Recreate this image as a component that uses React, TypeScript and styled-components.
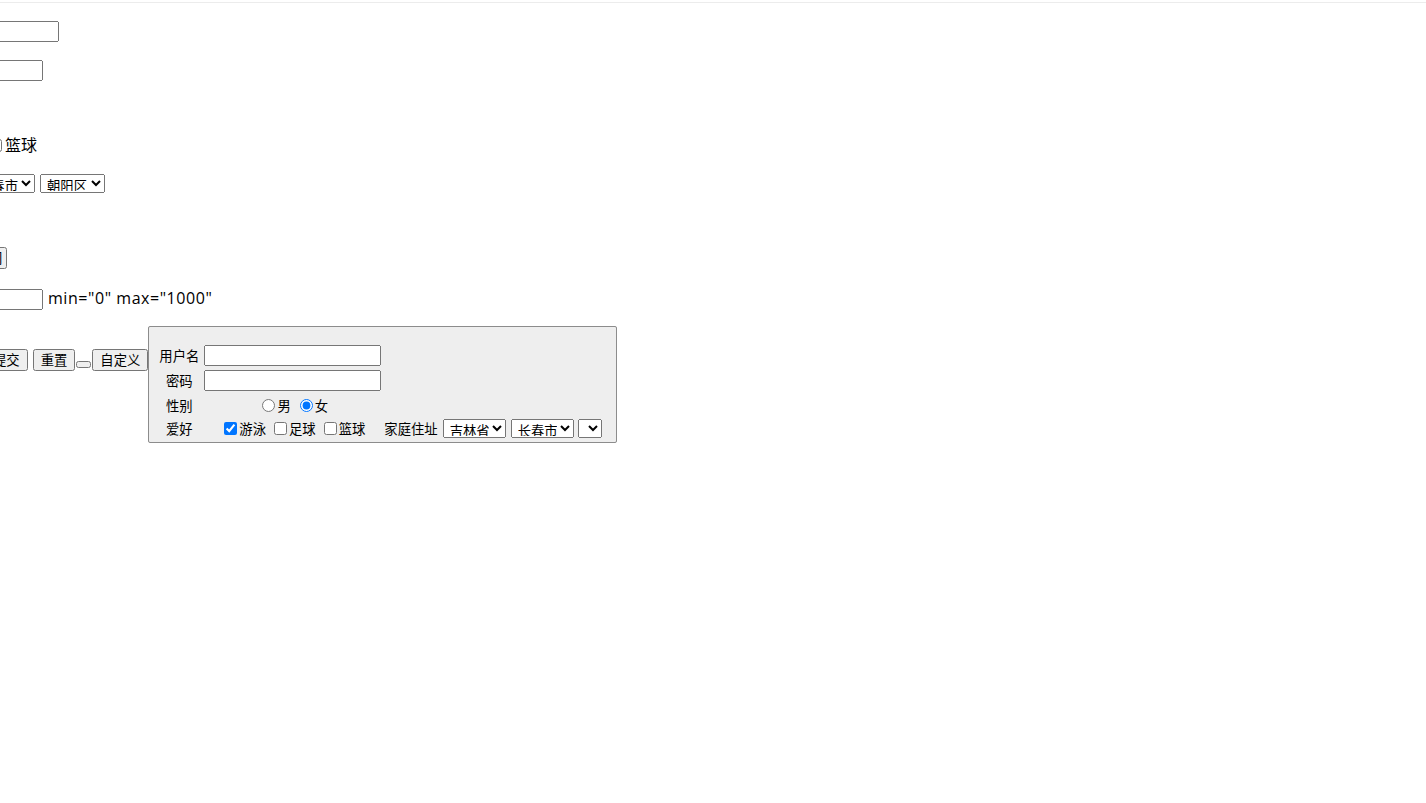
import React from "react";
import styled, { createGlobalStyle, css } from "styled-components";

const Global = createGlobalStyle`
  html, body { margin: 0; padding: 0; background: #fff; overflow: hidden; }
  body {
    font-family: "Open Sans", "Noto Sans CJK SC", sans-serif;
    font-size: 16px;
    color: #000;
  }
`;

const controlFont = css`
  font-family: "Noto Sans CJK SC", "Liberation Sans", sans-serif;
  font-size: 13.33px;
`;

const Page = styled.div`
  width: 1426px;
  height: 803px;
  overflow: hidden;
  display: flex;
  flex-direction: column;
`;

const TopRule = styled.div`
  flex-shrink: 0;
  margin-top: 2px;
  height: 1px;
  background: #ececec;
`;

const Row = styled.div<{ $gap: number; $shift: number; $h: number; $align?: string }>`
  flex-shrink: 0;
  display: flex;
  align-items: ${(p) => p.$align ?? "center"};
  margin-top: ${(p) => p.$gap}px;
  margin-left: ${(p) => p.$shift}px;
  height: ${(p) => p.$h}px;
  white-space: nowrap;
`;

const TextBox = styled.input<{ $w: number }>`
  ${controlFont};
  box-sizing: border-box;
  width: ${(p) => p.$w}px;
  height: 21px;
  margin: 0;
  flex-shrink: 0;
`;

const Select = styled.select<{ $w: number }>`
  ${controlFont};
  box-sizing: border-box;
  width: ${(p) => p.$w}px;
  height: 19px;
  margin: 0;
  padding: 0 0 1px 2px;
  flex-shrink: 0;
  line-height: 14px;
`;

const Btn = styled.button<{ $pad?: number; $w?: number }>`
  ${controlFont};
  box-sizing: border-box;
  height: 22px;
  margin: 0;
  padding: 0 ${(p) => p.$pad ?? 6}px;
  line-height: 18px;
  flex-shrink: 0;
  ${(p) => (p.$w ? `width: ${p.$w}px;` : "")}
`;

const TinyBtn = styled.button`
  box-sizing: border-box;
  width: 15px;
  height: 7px;
  margin: 0 1px 3px 1px;
  padding: 0;
  align-self: flex-end;
  flex-shrink: 0;
`;

const BodyText = styled.span<{ $ml?: number; $lift?: number; $track?: number }>`
  font-size: 16px;
  line-height: 22px;
  margin-left: ${(p) => p.$ml ?? 0}px;
  margin-bottom: ${(p) => p.$lift ?? 0}px;
  letter-spacing: ${(p) => p.$track ?? 0}px;
`;

const Check = styled.input`
  flex-shrink: 0;
  margin: 3px 3px 3px 4px;
`;

const ButtonBar = styled.div`
  display: flex;
  align-items: center;
  gap: 5px;
  height: 22px;
  margin-top: 23px;
`;

const Fieldset = styled.fieldset`
  box-sizing: border-box;
  width: 469px;
  height: 117px;
  margin: 0 0 0 1px;
  padding: 18px 12px 3px 8px;
  min-width: 0;
  border: 1px solid #8c8c8c;
  border-radius: 2px;
  background: #eeeeee;
  ${controlFont};
`;

const FormGrid = styled.div`
  display: grid;
  grid-template-columns: 44px 177px 1fr;
  grid-template-rows: 21px 21px 20px 19px;
  column-gap: 3px;
  row-gap: 4px;
  align-items: center;
`;

const Label = styled.div`
  ${controlFont};
  text-align: center;
  line-height: 19px;
  white-space: nowrap;
`;

const Cell = styled.div`
  ${controlFont};
  display: flex;
  align-items: center;
  justify-content: center;
  white-space: nowrap;
  line-height: 19px;
`;

const AddressCell = styled.div`
  ${controlFont};
  display: flex;
  align-items: center;
  gap: 5px;
  white-space: nowrap;
  line-height: 19px;
`;

const Radio = styled.input`
  margin: 3px 2px 2px 5px;
  flex-shrink: 0;
`;

const SmallCheck = styled.input`
  margin: 3px 2px 3px 4px;
  flex-shrink: 0;
`;

const OptText = styled.span`
  margin-right: 4px;
`;

const FieldInput = styled.input`
  ${controlFont};
  box-sizing: border-box;
  width: 177px;
  height: 21px;
  margin: 0;
`;

export default function App() {
  return (
    <Page>
      <Global />
      <TopRule />
      <Row $gap={18} $shift={-111} $h={21}>
        <TextBox type="text" $w={170} />
      </Row>
      <Row $gap={18} $shift={-127} $h={21}>
        <TextBox type="password" $w={170} />
      </Row>
      <Row $gap={53} $shift={-15} $h={22}>
        <Check type="checkbox" />
        <BodyText>篮球</BodyText>
      </Row>
      <Row $gap={18} $shift={-29} $h={19}>
        <Select $w={64}>
          <option>长春市</option>
        </Select>
        <Select $w={65} style={{ marginLeft: 5 }}>
          <option>朝阳区</option>
        </Select>
      </Row>
      <Row $gap={54} $shift={-56} $h={22}>
        <Btn $pad={3}>选择时间</Btn>
      </Row>
      <Row $gap={20} $shift={-127} $h={21}>
        <TextBox type="text" $w={170} />
        <BodyText $ml={5} $lift={3} $track={0.55}>min="0" max="1000"</BodyText>
      </Row>
      <Row $gap={16} $shift={-15} $h={117} $align="flex-start">
        <ButtonBar>
          <Btn type="submit">提交</Btn>
          <Btn type="reset" style={{ marginRight: -5 }}>重置</Btn>
          <TinyBtn type="button" style={{ marginRight: -4 }} />
          <Btn type="button" $w={56}>自定义</Btn>
        </ButtonBar>
        <Fieldset style={{ marginLeft: 0 }}>
          <FormGrid>
            <Label>用户名</Label>
            <FieldInput type="text" />
            <div />
            <Label>密码</Label>
            <FieldInput type="password" />
            <div />
            <Label>性别</Label>
            <Cell>
              <Radio type="radio" name="sex" />
              <OptText>男</OptText>
              <Radio type="radio" name="sex" defaultChecked style={{ marginLeft: 5 }} />
              <span>女</span>
            </Cell>
            <div />
            <Label>爱好</Label>
            <Cell>
              <SmallCheck type="checkbox" defaultChecked />
              <OptText>游泳</OptText>
              <SmallCheck type="checkbox" />
              <OptText>足球</OptText>
              <SmallCheck type="checkbox" />
              <span>篮球</span>
            </Cell>
            <AddressCell>
              <span>家庭住址</span>
              <Select $w={63}>
                <option>吉林省</option>
              </Select>
              <Select $w={63}>
                <option>长春市</option>
              </Select>
              <Select $w={24} style={{ marginLeft: -1 }}>
                <option></option>
              </Select>
            </AddressCell>
          </FormGrid>
        </Fieldset>
      </Row>
    </Page>
  );
}
